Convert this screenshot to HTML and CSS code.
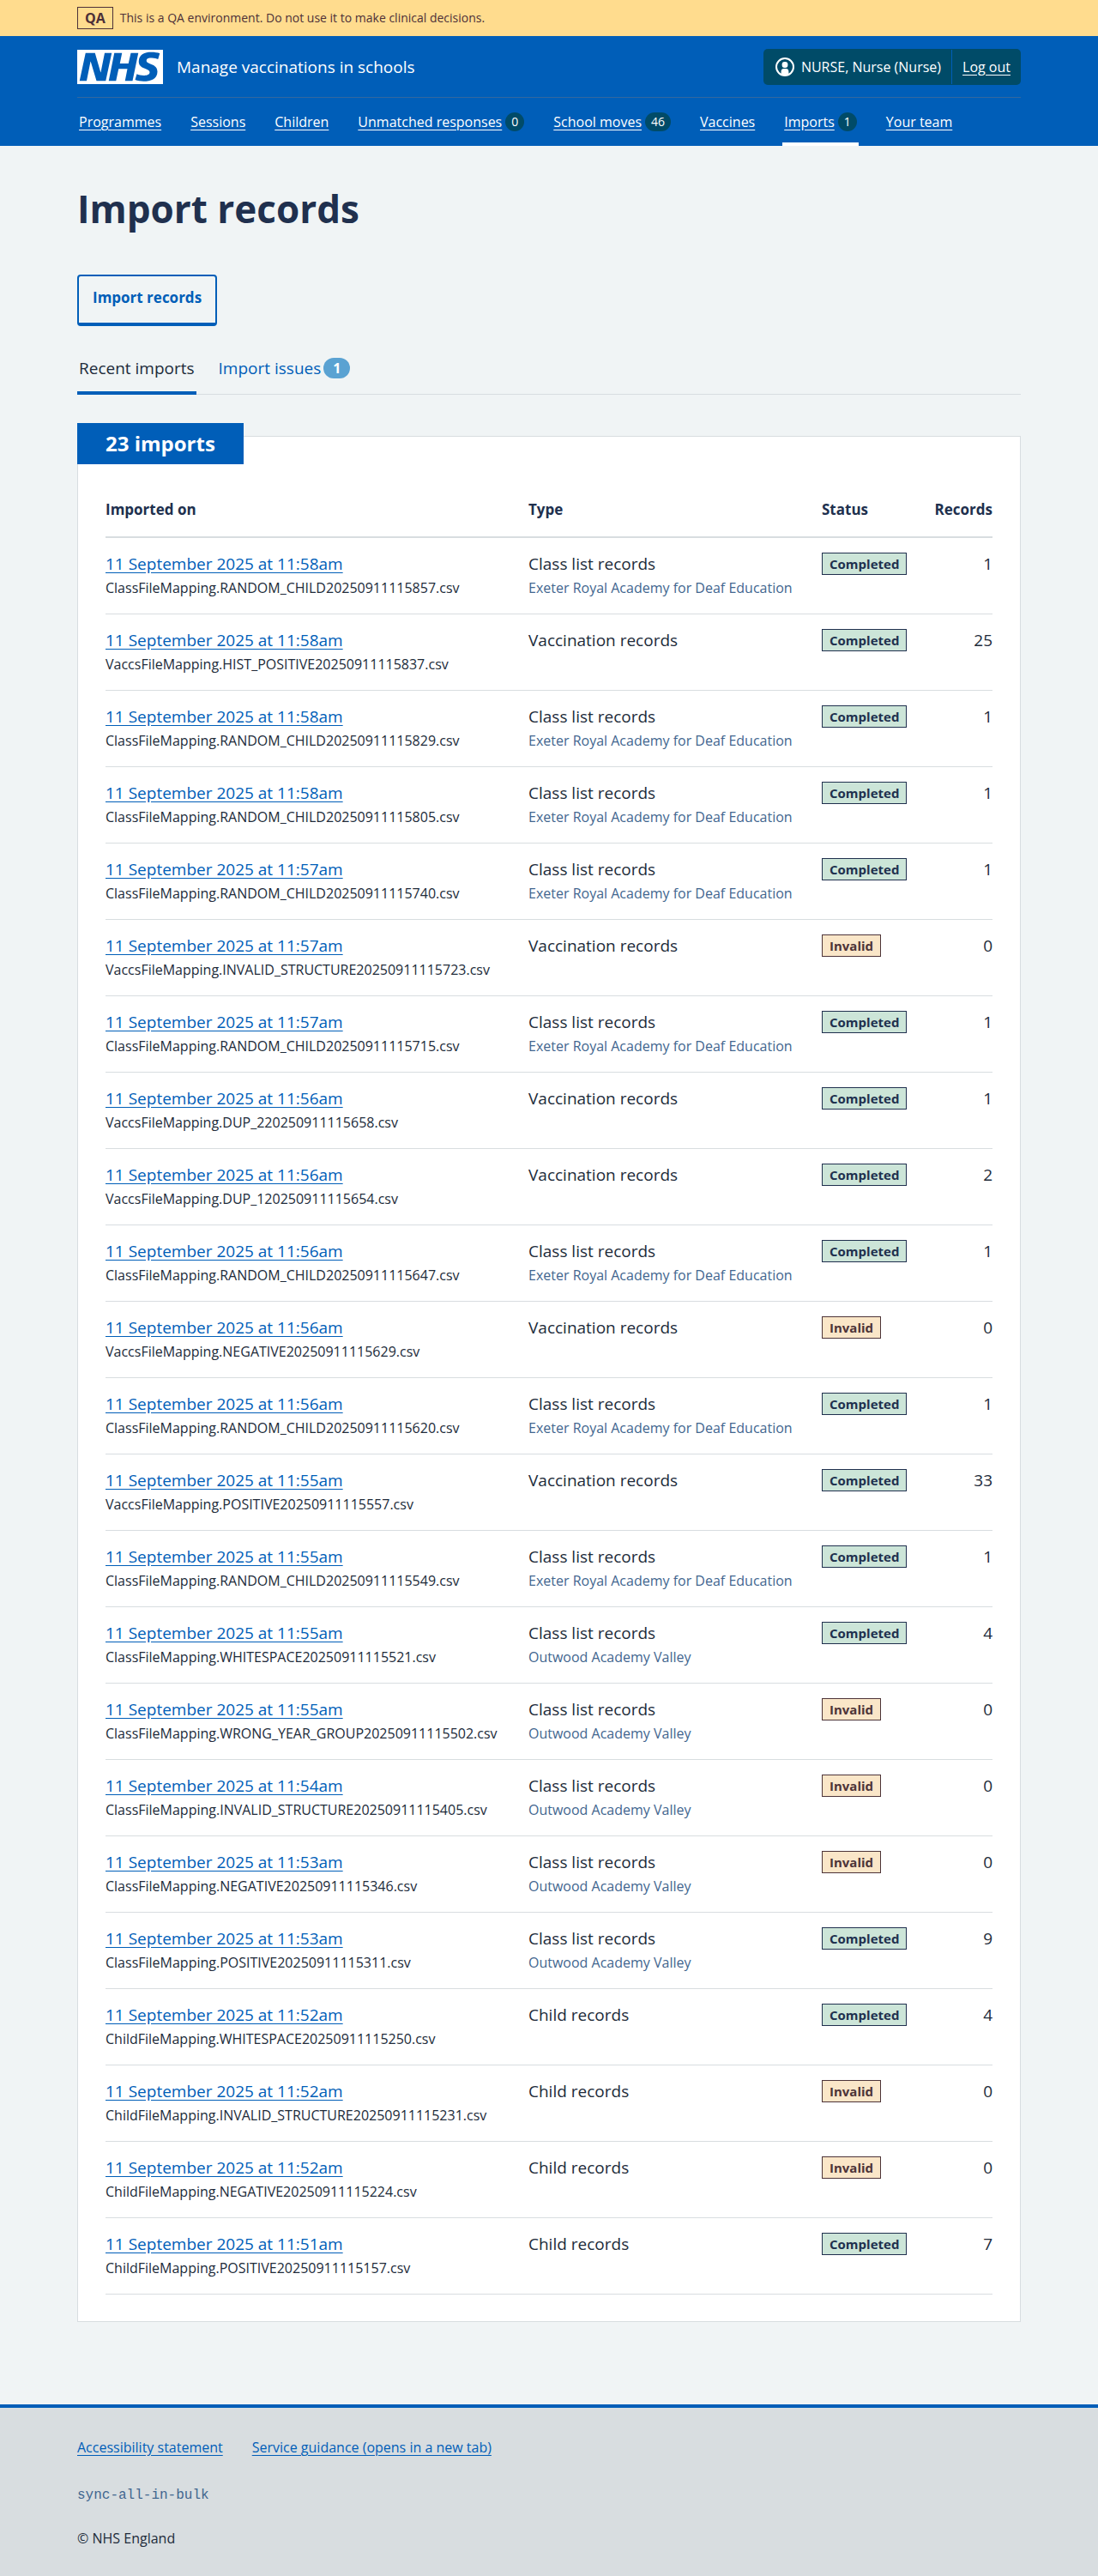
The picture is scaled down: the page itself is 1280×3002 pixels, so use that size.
FILE: index.html
```html
<!DOCTYPE html>
<html lang="en">
<head>
<meta charset="utf-8">
<meta name="viewport" content="width=device-width, initial-scale=1">
<title>Import records – Manage vaccinations in schools</title>
<link rel="stylesheet" href="styles.css">
</head>
<body>
<div class="environment">
  <div class="container environment-inner">
    <strong class="environment-tag">QA</strong>
    <span>This is a QA environment. Do not use it to make clinical decisions.</span>
  </div>
</div>
<header class="header">
  <div class="container">
    <div class="header-top">
      <a class="service" href="#">
        <svg class="logo" viewBox="0 0 40 16" role="img" aria-label="NHS"><path fill="#fff" d="M0 0h40v16H0z"/><path fill="#005eb8" d="M3.9 1.5h4.4l2.6 9h.1l1.8-9h3.3l-2.8 13H9l-2.7-9h-.1l-1.8 9H1.1M17.3 1.5h3.6l-1 4.9h4L25 1.5h3.5l-2.7 13h-3.5l1.1-5.6h-4.1l-1.2 5.6h-3.4M37.7 4.4c-.7-.3-1.6-.6-2.9-.6-1.4 0-2.5.2-2.5 1.3 0 1.8 5.1 1.2 5.1 5.1 0 3.6-3.3 4.5-6.4 4.5-1.3 0-2.9-.3-4-.7l.8-2.7c.7.4 2.1.7 3.2.7s2.8-.2 2.8-1.5c0-2.1-5.1-1.3-5.1-5 0-3.4 2.9-4.4 5.8-4.4 1.6 0 3.1.2 4 .6"/></svg>
        <span class="service-name">Manage vaccinations in schools</span>
      </a>
      <div class="account">
        <span class="account-item">
          <svg class="account-icon" viewBox="0 0 22 22" aria-hidden="true"><circle cx="11" cy="11" r="10" fill="none" stroke="#fff" stroke-width="2"/><rect x="7.6" y="5" width="6.8" height="7" rx="3" fill="#fff"/><path fill="#fff" d="M6.6 20v-3.6a3.4 3.4 0 0 1 3.4-3.4h2a3.4 3.4 0 0 1 3.4 3.4V20a10 10 0 0 1-8.800 0z"/></svg>
          NURSE, Nurse (Nurse)
        </span>
        <a class="account-item account-link" href="#">Log out</a>
      </div>
    </div>
    <nav class="nav" aria-label="Menu">
      <a class="nav-item" href="#"><span class="nav-text">Programmes</span></a>
      <a class="nav-item" href="#"><span class="nav-text">Sessions</span></a>
      <a class="nav-item" href="#"><span class="nav-text">Children</span></a>
      <a class="nav-item" href="#"><span class="nav-text">Unmatched responses</span><span class="nav-count">0</span></a>
      <a class="nav-item" href="#"><span class="nav-text">School moves</span><span class="nav-count">46</span></a>
      <a class="nav-item" href="#"><span class="nav-text">Vaccines</span></a>
      <a class="nav-item nav-item-current" href="#" aria-current="page"><span class="nav-text">Imports</span><span class="nav-count">1</span></a>
      <a class="nav-item" href="#"><span class="nav-text">Your team</span></a>
    </nav>
  </div>
</header>
<main class="container main">
  <h1 class="title">Import records</h1>
  <button class="button" type="button">Import records</button>
  <nav class="tabs" aria-label="Imports">
    <a class="tab tab-current" href="#" aria-current="page">Recent imports</a>
    <a class="tab" href="#">Import issues<span class="tab-count">1</span></a>
  </nav>
  <section class="card">
    <h2 class="card-heading">23 imports</h2>
    <table class="table">
      <colgroup><col><col class="col-type"><col class="col-status"><col class="col-records"></colgroup>
      <thead>
        <tr><th scope="col">Imported on</th><th scope="col">Type</th><th scope="col">Status</th><th scope="col" class="number">Records</th></tr>
      </thead>
      <tbody>
        <tr><td><a href="#">11 September 2025 at 11:58am</a><span class="file">ClassFileMapping.RANDOM_CHILD20250911115857.csv</span></td><td>Class list records<span class="school">Exeter Royal Academy for Deaf Education</span></td><td><strong class="tag">Completed</strong></td><td class="number">1</td></tr>
        <tr><td><a href="#">11 September 2025 at 11:58am</a><span class="file">VaccsFileMapping.HIST_POSITIVE20250911115837.csv</span></td><td>Vaccination records</td><td><strong class="tag">Completed</strong></td><td class="number">25</td></tr>
        <tr><td><a href="#">11 September 2025 at 11:58am</a><span class="file">ClassFileMapping.RANDOM_CHILD20250911115829.csv</span></td><td>Class list records<span class="school">Exeter Royal Academy for Deaf Education</span></td><td><strong class="tag">Completed</strong></td><td class="number">1</td></tr>
        <tr><td><a href="#">11 September 2025 at 11:58am</a><span class="file">ClassFileMapping.RANDOM_CHILD20250911115805.csv</span></td><td>Class list records<span class="school">Exeter Royal Academy for Deaf Education</span></td><td><strong class="tag">Completed</strong></td><td class="number">1</td></tr>
        <tr><td><a href="#">11 September 2025 at 11:57am</a><span class="file">ClassFileMapping.RANDOM_CHILD20250911115740.csv</span></td><td>Class list records<span class="school">Exeter Royal Academy for Deaf Education</span></td><td><strong class="tag">Completed</strong></td><td class="number">1</td></tr>
        <tr><td><a href="#">11 September 2025 at 11:57am</a><span class="file">VaccsFileMapping.INVALID_STRUCTURE20250911115723.csv</span></td><td>Vaccination records</td><td><strong class="tag tag-invalid">Invalid</strong></td><td class="number">0</td></tr>
        <tr><td><a href="#">11 September 2025 at 11:57am</a><span class="file">ClassFileMapping.RANDOM_CHILD20250911115715.csv</span></td><td>Class list records<span class="school">Exeter Royal Academy for Deaf Education</span></td><td><strong class="tag">Completed</strong></td><td class="number">1</td></tr>
        <tr><td><a href="#">11 September 2025 at 11:56am</a><span class="file">VaccsFileMapping.DUP_220250911115658.csv</span></td><td>Vaccination records</td><td><strong class="tag">Completed</strong></td><td class="number">1</td></tr>
        <tr><td><a href="#">11 September 2025 at 11:56am</a><span class="file">VaccsFileMapping.DUP_120250911115654.csv</span></td><td>Vaccination records</td><td><strong class="tag">Completed</strong></td><td class="number">2</td></tr>
        <tr><td><a href="#">11 September 2025 at 11:56am</a><span class="file">ClassFileMapping.RANDOM_CHILD20250911115647.csv</span></td><td>Class list records<span class="school">Exeter Royal Academy for Deaf Education</span></td><td><strong class="tag">Completed</strong></td><td class="number">1</td></tr>
        <tr><td><a href="#">11 September 2025 at 11:56am</a><span class="file">VaccsFileMapping.NEGATIVE20250911115629.csv</span></td><td>Vaccination records</td><td><strong class="tag tag-invalid">Invalid</strong></td><td class="number">0</td></tr>
        <tr><td><a href="#">11 September 2025 at 11:56am</a><span class="file">ClassFileMapping.RANDOM_CHILD20250911115620.csv</span></td><td>Class list records<span class="school">Exeter Royal Academy for Deaf Education</span></td><td><strong class="tag">Completed</strong></td><td class="number">1</td></tr>
        <tr><td><a href="#">11 September 2025 at 11:55am</a><span class="file">VaccsFileMapping.POSITIVE20250911115557.csv</span></td><td>Vaccination records</td><td><strong class="tag">Completed</strong></td><td class="number">33</td></tr>
        <tr><td><a href="#">11 September 2025 at 11:55am</a><span class="file">ClassFileMapping.RANDOM_CHILD20250911115549.csv</span></td><td>Class list records<span class="school">Exeter Royal Academy for Deaf Education</span></td><td><strong class="tag">Completed</strong></td><td class="number">1</td></tr>
        <tr><td><a href="#">11 September 2025 at 11:55am</a><span class="file">ClassFileMapping.WHITESPACE20250911115521.csv</span></td><td>Class list records<span class="school">Outwood Academy Valley</span></td><td><strong class="tag">Completed</strong></td><td class="number">4</td></tr>
        <tr><td><a href="#">11 September 2025 at 11:55am</a><span class="file">ClassFileMapping.WRONG_YEAR_GROUP20250911115502.csv</span></td><td>Class list records<span class="school">Outwood Academy Valley</span></td><td><strong class="tag tag-invalid">Invalid</strong></td><td class="number">0</td></tr>
        <tr><td><a href="#">11 September 2025 at 11:54am</a><span class="file">ClassFileMapping.INVALID_STRUCTURE20250911115405.csv</span></td><td>Class list records<span class="school">Outwood Academy Valley</span></td><td><strong class="tag tag-invalid">Invalid</strong></td><td class="number">0</td></tr>
        <tr><td><a href="#">11 September 2025 at 11:53am</a><span class="file">ClassFileMapping.NEGATIVE20250911115346.csv</span></td><td>Class list records<span class="school">Outwood Academy Valley</span></td><td><strong class="tag tag-invalid">Invalid</strong></td><td class="number">0</td></tr>
        <tr><td><a href="#">11 September 2025 at 11:53am</a><span class="file">ClassFileMapping.POSITIVE20250911115311.csv</span></td><td>Class list records<span class="school">Outwood Academy Valley</span></td><td><strong class="tag">Completed</strong></td><td class="number">9</td></tr>
        <tr><td><a href="#">11 September 2025 at 11:52am</a><span class="file">ChildFileMapping.WHITESPACE20250911115250.csv</span></td><td>Child records</td><td><strong class="tag">Completed</strong></td><td class="number">4</td></tr>
        <tr><td><a href="#">11 September 2025 at 11:52am</a><span class="file">ChildFileMapping.INVALID_STRUCTURE20250911115231.csv</span></td><td>Child records</td><td><strong class="tag tag-invalid">Invalid</strong></td><td class="number">0</td></tr>
        <tr><td><a href="#">11 September 2025 at 11:52am</a><span class="file">ChildFileMapping.NEGATIVE20250911115224.csv</span></td><td>Child records</td><td><strong class="tag tag-invalid">Invalid</strong></td><td class="number">0</td></tr>
        <tr><td><a href="#">11 September 2025 at 11:51am</a><span class="file">ChildFileMapping.POSITIVE20250911115157.csv</span></td><td>Child records</td><td><strong class="tag">Completed</strong></td><td class="number">7</td></tr>
      </tbody>
    </table>
  </section>
</main>
<footer class="footer">
  <div class="container footer-inner">
    <div class="footer-links">
      <a href="#">Accessibility statement</a>
      <a href="#">Service guidance (opens in a new tab)</a>
    </div>
    <code class="version">sync-all-in-bulk</code>
    <p class="copyright">© NHS England</p>
  </div>
</footer>
</body>
</html>
```
FILE: styles.css
```css
:root {
  --blue: #005eb8;
  --text: #212b3a;
  --navy: #20304e;
  --secondary: #42668f;
  --border: #d8dde0;
  --teal: #004b68;
}

* { box-sizing: border-box; }

body {
  margin: 0;
  background: #f0f4f5;
  color: var(--text);
  font: 16px/28px "Open Sans", "Noto Sans", sans-serif;
}

a { color: var(--blue); }

.container {
  max-width: 1164px;
  margin: 0 auto;
  padding: 0 32px;
}

/* Environment banner */
.environment {
  background: #ffdc8e;
  color: #4d3038;
  font-size: 14px;
}

.environment-inner {
  display: flex;
  align-items: center;
  gap: 8px;
  height: 42px;
}

.environment-tag {
  padding: 0 8px;
  border: 1px solid;
  font-size: 16px;
  font-weight: 700;
  line-height: 24px;
}

/* Header */
.header {
  background: var(--blue);
  color: #fff;
}

.header a { color: #fff; }

.header-top {
  display: flex;
  align-items: center;
  justify-content: space-between;
  height: 72px;
  border-bottom: 1px solid #33689f;
}

.service {
  display: flex;
  align-items: center;
  gap: 16px;
  text-decoration: none;
}

.logo {
  width: 100px;
  height: 40px;
}

.service-name { font-size: 19px; }

.account {
  display: flex;
  height: 42px;
  border-radius: 5px;
  background: var(--teal);
}

.account-item {
  display: flex;
  align-items: center;
  gap: 8px;
  padding: 0 12px 0 14px;
}

.account-link {
  margin: 1px 0;
  padding: 0 12px;
  border-left: 1px solid var(--blue);
}

.account-icon {
  width: 22px;
  height: 22px;
}

.nav {
  display: flex;
  gap: 30px;
}

.nav-item {
  display: flex;
  align-items: center;
  gap: 4px;
  height: 56px;
  padding: 4px 2px 0;
  border-bottom: 4px solid transparent;
  text-decoration: none;
}

.nav-item-current { border-color: #fff; }

.nav-text,
.account-link { text-decoration: underline; text-underline-offset: 3px; }

.nav-count {
  padding: 0 7px;
  border-radius: 12px;
  background: var(--teal);
  font-size: 14px;
  line-height: 22px;
}

/* Page body */
.main {
  padding-top: 40px;
  padding-bottom: 96px;
}

.title {
  margin: 0 0 44px;
  color: var(--navy);
  font-size: 44px;
  font-weight: 700;
  line-height: 66px;
}

.button {
  display: block;
  padding: 13px 16px 17px;
  border: 2px solid var(--blue);
  border-bottom-width: 4px;
  border-radius: 4px;
  background: transparent;
  color: var(--blue);
  font: 700 17px/24px "Open Sans", "Noto Sans", sans-serif;
}

.tabs {
  display: flex;
  gap: 24px;
  margin-top: 28px;
  font-size: 19px;
  box-shadow: inset 0 -1px var(--border);
}

.tab {
  display: flex;
  align-items: center;
  gap: 3px;
  height: 52px;
  padding: 0 2px 6px;
  border-bottom: 4px solid transparent;
  text-decoration: none;
}

.tab-current {
  border-color: var(--blue);
  color: var(--text);
}

.tab-count {
  padding: 0 11px;
  border-radius: 12px;
  background: #5aa2d2;
  color: #fff;
  font-size: 16px;
  font-weight: 700;
  line-height: 24px;
}

.card {
  margin-top: 48px;
  padding: 0 32px 31px;
  border: 1px solid var(--border);
  background: #fff;
}

.card-heading {
  width: fit-content;
  margin: -16px 0 0 -33px;
  padding: 0 33px;
  background: var(--blue);
  color: #fff;
  font-size: 24px;
  font-weight: 700;
  line-height: 48px;
}

.table {
  width: 100%;
  border-collapse: separate;
  border-spacing: 0;
  table-layout: fixed;
  font-size: 19px;
}

.col-type { width: 342px; }
.col-status { width: 110px; }
.col-records { width: 89px; }

.table th {
  padding: 39px 0 17px;
  border-bottom: 2px solid var(--border);
  color: var(--navy);
  font-size: 17px;
  font-weight: 700;
  text-align: left;
}

.table td {
  padding: 16px 0;
  border-bottom: 1px solid var(--border);
  vertical-align: top;
}

.table .number { text-align: right; }

.table a,
.footer a { text-underline-offset: 3px; }

.file,
.school {
  display: block;
  font-size: 16px;
}

.school { color: var(--secondary); }

.tag {
  display: inline-block;
  margin: 1px 0;
  padding: 0 8px;
  border: 1px solid var(--navy);
  background: #cce5d8;
  color: var(--navy);
  font-size: 15px;
  font-weight: 700;
  line-height: 24px;
  vertical-align: top;
}

.tag-invalid {
  border-color: #4d3438;
  background: #fae6c8;
  color: #4d3438;
}

/* Footer */
.footer {
  border-top: 4px solid var(--blue);
  background: var(--border);
}

.footer-inner {
  padding-top: 32px;
  padding-bottom: 30px;
}

.footer-links {
  display: flex;
  flex-wrap: wrap;
  gap: 8px 34px;
  margin-bottom: 28px;
}

.version {
  display: block;
  color: var(--secondary);
  font: 16px/28px "Liberation Mono", monospace;
}

.copyright { margin: 22px 0 0; }
```
